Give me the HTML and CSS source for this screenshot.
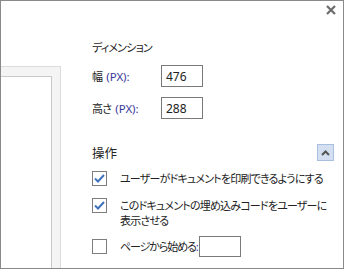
FILE: index.html
```html
<!DOCTYPE html>
<html lang="ja">
<head>
    <meta charset="UTF-8">
    <title>埋め込み設定</title>
    <link rel="stylesheet" href="styles.css">
</head>
<body>

<div class="dialog">
    <!-- Close button -->
    <button class="close" title="閉じる">
        <svg width="10" height="10" viewBox="0 0 10 10"><path d="M1 1 L9 9 M9 1 L1 9" stroke="#6b6b6b" stroke-width="2.2" fill="none"/></svg>
    </button>

    <!-- Preview area -->
    <div class="preview">
        <div class="preview-inner"></div>
    </div>

    <!-- Settings -->
    <div class="settings">
        <div class="heading">ディメンション</div>

        <div class="size-row">
            <label class="size-label">幅<span class="unit">(PX):</span></label>
            <input class="num" type="text" value="476">
        </div>
        <div class="size-row">
            <label class="size-label">高さ<span class="unit">(PX):</span></label>
            <input class="num" type="text" value="288">
        </div>

        <div class="section-head">
            <span class="section-title">操作</span>
            <button class="collapse">
                <svg width="9" height="6" viewBox="0 0 9 6"><path d="M1 5 L4.5 1.5 L8 5" stroke="#555" stroke-width="2" fill="none"/></svg>
            </button>
        </div>

        <div class="option">
            <span class="check checked"><svg width="11" height="9" viewBox="0 0 11 9"><path d="M1 4.5 L4 7.5 L10 1" stroke="#3f72b8" stroke-width="2" fill="none"/></svg></span>
            <span class="option-text">ユーザーがドキュメントを印刷できるようにする</span>
        </div>
        <div class="option">
            <span class="check checked"><svg width="11" height="9" viewBox="0 0 11 9"><path d="M1 4.5 L4 7.5 L10 1" stroke="#3f72b8" stroke-width="2" fill="none"/></svg></span>
            <span class="option-text">このドキュメントの埋め込みコードをユーザーに<br>表示させる</span>
        </div>
        <div class="option start">
            <span class="check"></span>
            <span class="option-text">ページから始める<span class="colon">:</span></span>
            <input class="num page" type="text" value="">
        </div>
    </div>
</div>

</body>
</html>
```

FILE: styles.css
```css
/* Page */
body {
    margin: 0;
    background: #fff;
}

/* Dialog frame */
.dialog {
    position: relative;
    display: flex;
    width: 344px;
    height: 269px;
    box-sizing: border-box;
    border: 1px solid #8a8a8a;
    overflow: hidden;
    font-family: "Noto Sans CJK JP", "Noto Sans", sans-serif;
    font-feature-settings: "palt";
    font-size: 11px;
    letter-spacing: -0.8px;
    color: #222;
}

/* Close X in the corner */
.close {
    position: absolute;
    top: 4px;
    right: 7px;
    width: 10px;
    height: 10px;
    padding: 0;
    border: none;
    background: none;
}

.close svg {
    display: block;
}

/* Left preview strip */
.preview {
    width: 60px;
    margin-top: 65px;
    box-sizing: border-box;
    border-top: 1px solid #dcdcdc;
    border-right: 1px solid #dcdcdc;
    background: #f4f4f4;
}

.preview-inner {
    width: 51px;
    height: 100%;
    margin-top: 9px;
    box-sizing: border-box;
    border-top: 1px solid #c9c9c9;
    border-right: 1px solid #c9c9c9;
    background: #fff;
}

/* Right settings column */
.settings {
    flex: 1;
    margin-left: 31px;
    padding-top: 38px;
    padding-right: 8px;
}

.heading {
    line-height: 16px;
}

.size-row {
    display: flex;
    align-items: center;
    height: 22px;
    margin-top: 10px;
}

.size-row:first-of-type {
    margin-top: 11px;
}

.size-label {
    width: 69px;
}

.unit,
.colon {
    font-family: "Noto Sans", sans-serif;
    font-size: 11.5px;
    letter-spacing: 0;
    color: #3a3a9c;
}

.unit {
    margin-left: 4px;
}

input.num {
    width: 42px;
    height: 22px;
    box-sizing: border-box;
    margin: 0;
    padding: 0 4px;
    border: 1px solid #7a7a7a;
    font-family: "Noto Sans", sans-serif;
    font-size: 12px;
    letter-spacing: 0;
    color: #222;
}

/* Section header with collapse button */
.section-head {
    display: flex;
    justify-content: space-between;
    align-items: center;
    height: 17px;
    margin-top: 25px;
}

.section-title {
    font-size: 12.5px;
    letter-spacing: 0;
}

.collapse {
    width: 17px;
    height: 17px;
    padding: 0;
    margin-right: 1px;
    border: 1px solid #a9bfe0;
    background: #d4e0f1;
    display: flex;
    align-items: center;
    justify-content: center;
}

/* Checkbox options */
.option {
    display: flex;
    align-items: flex-start;
    line-height: 15px;
    margin-top: 10px;
}

.option + .option {
    margin-top: 12px;
}

.option.start {
    align-items: center;
    margin-top: 8px;
}

.check {
    flex: none;
    width: 15px;
    height: 15px;
    box-sizing: border-box;
    border: 1px solid #7d7d7d;
    background: #fff;
    margin-right: 13px;
    display: flex;
    align-items: center;
    justify-content: center;
}

.option-text {
    flex: 1;
}

.option.start .option-text {
    flex: none;
    letter-spacing: -1.1px;
}

input.page {
    height: 21px;
    margin-left: 0;
}
```
